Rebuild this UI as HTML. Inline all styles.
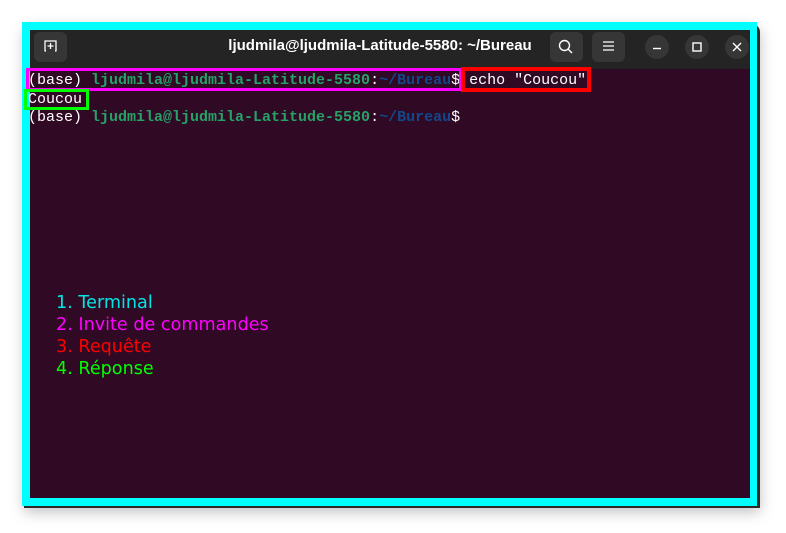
<!DOCTYPE html>
<html><head><meta charset="utf-8"><style>
body{margin:0;width:786px;height:533px;background:#fff;position:relative;overflow:hidden;font-family:"Liberation Sans",sans-serif}
.shadow{position:absolute;left:24px;top:24px;width:736px;height:484px;background:#2a2a2a;box-shadow:0 4px 14px rgba(0,0,0,.25);border-radius:8px 8px 0 0}
.cyan{position:absolute;left:22px;top:22px;width:735px;height:484px;background:#00ffff}
.win{position:absolute;left:30px;top:30px;width:720px;height:468px;background:#300a24}
.hdr{position:absolute;left:30px;top:30px;width:720px;height:39px;background:#242424}
.btn{position:absolute;top:32px;width:33px;height:30px;background:#363636;border-radius:6px}
.circ{position:absolute;top:35px;width:24px;height:24px;border-radius:50%;background:#363636}
.title{position:absolute;left:0;width:760px;top:37px;text-align:center;color:#fff;font-weight:bold;font-size:15px}
.mono{position:absolute;font-family:"Liberation Mono",monospace;font-size:15px;color:#fff;white-space:pre;line-height:18.5px}
.g{color:#26a269;font-weight:bold}.b{color:#12488b;font-weight:bold}
.box{position:absolute;box-sizing:border-box}
.leg{position:absolute;left:56px;top:292px;font-size:17.6px;line-height:22px;font-family:"DejaVu Sans",sans-serif}
</style></head><body>
<div class="shadow"></div>
<div class="cyan"></div>
<div class="win"></div>
<div class="hdr"></div>
<div class="btn" style="left:34px"></div>
<svg style="position:absolute;left:42px;top:38px" width="18" height="16" viewBox="0 0 18 16"><path d="M3 13V3H14V13M2.5 13H4M13 13H14.5M8.5 5V11M5.5 8H11.5" stroke="#fff" stroke-width="1.3" fill="none"/></svg>
<div class="title">ljudmila@ljudmila-Latitude-5580: ~/Bureau</div>
<div class="btn" style="left:550px"></div>
<svg style="position:absolute;left:557px;top:38px" width="18" height="18" viewBox="0 0 18 18"><circle cx="7.5" cy="7.5" r="5" stroke="#fff" stroke-width="1.4" fill="none"/><path d="M11 11L15 15" stroke="#fff" stroke-width="1.5"/></svg>
<div class="btn" style="left:592px"></div>
<svg style="position:absolute;left:601px;top:39px" width="16" height="14" viewBox="0 0 16 14"><path d="M2 3H13M2 7H13M2 11H13" stroke="#fff" stroke-width="1.3"/></svg>
<div class="circ" style="left:645px"></div>
<svg style="position:absolute;left:645px;top:35px" width="24" height="24"><path d="M8 13.5H16" stroke="#fff" stroke-width="1.4"/></svg>
<div class="circ" style="left:685px"></div>
<svg style="position:absolute;left:685px;top:35px" width="24" height="24"><rect x="8" y="8" width="8" height="8" stroke="#fff" stroke-width="1.4" fill="none"/></svg>
<div class="circ" style="left:725px"></div>
<svg style="position:absolute;left:725px;top:35px" width="24" height="24"><path d="M8 8L16 16M16 8L8 16" stroke="#fff" stroke-width="1.4"/></svg>

<div class="mono" style="left:28px;top:72px">(base) <span class="g">ljudmila@ljudmila-Latitude-5580</span>:<span class="b">~/Bureau</span>$ echo "Coucou"
Coucou
(base) <span class="g">ljudmila@ljudmila-Latitude-5580</span>:<span class="b">~/Bureau</span>$</div>
<div class="box" style="left:26px;top:68px;width:436px;height:23px;border:3px solid #ff00ff"></div>
<div class="box" style="left:461px;top:67px;width:130px;height:25px;border:4px solid #ff0000"></div>
<div class="box" style="left:24px;top:89px;width:65px;height:21px;border:3px solid #00ff00"></div>

<div class="leg"><div style="color:#00e6e6">1. Terminal</div><div style="color:#ff00ff">2. Invite de commandes</div><div style="color:#ff0000">3. Requête</div><div style="color:#00ff00">4. Réponse</div></div>
</body></html>
